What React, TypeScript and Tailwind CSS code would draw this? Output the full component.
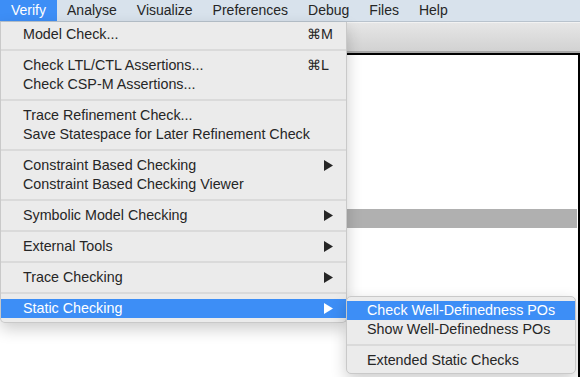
import React from 'react';

type Entry =
    | { kind: 'item'; label: string; shortcut?: string; submenu?: boolean; active?: boolean }
    | { kind: 'sep' };

const menuBar = ['Verify', 'Analyse', 'Visualize', 'Preferences', 'Debug', 'Files', 'Help'];

const verifyMenu: Entry[] = [
    { kind: 'item', label: 'Model Check...', shortcut: '⌘M' },
    { kind: 'sep' },
    { kind: 'item', label: 'Check LTL/CTL Assertions...', shortcut: '⌘L' },
    { kind: 'item', label: 'Check CSP-M Assertions...' },
    { kind: 'sep' },
    { kind: 'item', label: 'Trace Refinement Check...' },
    { kind: 'item', label: 'Save Statespace for Later Refinement Check' },
    { kind: 'sep' },
    { kind: 'item', label: 'Constraint Based Checking', submenu: true },
    { kind: 'item', label: 'Constraint Based Checking Viewer' },
    { kind: 'sep' },
    { kind: 'item', label: 'Symbolic Model Checking', submenu: true },
    { kind: 'sep' },
    { kind: 'item', label: 'External Tools', submenu: true },
    { kind: 'sep' },
    { kind: 'item', label: 'Trace Checking', submenu: true },
    { kind: 'sep' },
    { kind: 'item', label: 'Static Checking', submenu: true, active: true },
];

const staticMenu: Entry[] = [
    { kind: 'item', label: 'Check Well-Definedness POs', active: true },
    { kind: 'item', label: 'Show Well-Definedness POs' },
    { kind: 'sep' },
    { kind: 'item', label: 'Extended Static Checks' },
];

// small right-pointing triangle used for submenu entries
function Arrow({ white }: { white?: boolean }) {
    return (
        <svg width="9" height="11" viewBox="0 0 9 11" className="shrink-0">
            <polygon points="0,0 9,5.5 0,11" fill={white ? '#ffffff' : '#262626'} />
        </svg>
    );
}

function MenuRows({ entries, indent }: { entries: Entry[]; indent: string }) {
    return (
        <>
            {entries.map((e, i) =>
                e.kind === 'sep' ? (
                    <div key={i} className="flex h-[12px] items-center">
                        <div className="h-[2px] w-full bg-[#dadada]" />
                    </div>
                ) : (
                    <div
                        key={i}
                        className={`flex h-[19px] items-center pr-[13px] ${indent} ${
                            e.active ? 'bg-[#3d8ef6] text-white' : ''
                        }`}
                    >
                        <span className="flex-1 whitespace-nowrap">{e.label}</span>
                        {e.shortcut && <span className="w-[26px] whitespace-nowrap">{e.shortcut}</span>}
                        {e.submenu && <Arrow white={e.active} />}
                    </div>
                )
            )}
        </>
    );
}

export default function App() {
    return (
        <div className="relative h-[377px] w-[580px] overflow-hidden bg-white font-['Liberation_Sans',Arial,sans-serif] text-[14.3px] text-[#262626]">
            {/* menu bar */}
            <nav className="flex h-[22px] items-stretch border-b border-[#b9c3cd] bg-[#d8e2ec]">
                {menuBar.map((m, i) => (
                    <div
                        key={m}
                        className={`flex items-center whitespace-nowrap text-[14px] ${
                            i === 0 ? 'bg-[#3d8ef6] pl-[11px] pr-[11px] text-white' : 'px-[10px]'
                        }`}
                    >
                        {m}
                    </div>
                ))}
            </nav>

            {/* window behind the menu */}
            <div className="h-[31px] border-t border-[#f2f2f2] border-b-2 border-b-[#a8a8a8] bg-gradient-to-b from-[#e6e6e6] to-[#d2d2d2]" />
            <div className="h-[324px] border-r-2 border-t-2 border-black bg-white pr-[1px]">
                <div className="mt-[154px] h-[19px] bg-[#b0b0b0]" />
            </div>

            {/* Verify menu */}
            <div className="absolute left-0 top-[22px] w-[347px] rounded-b-[5px] border-x border-b border-[#c9c9c9] bg-[#ebebeb] pt-[3px] pb-[4px] shadow-[0_6px_16px_rgba(0,0,0,0.2)]">
                <MenuRows entries={verifyMenu} indent="pl-[22px]" />
            </div>

            {/* Static Checking submenu */}
            <div className="absolute left-[346px] top-[296px] w-[230px] overflow-hidden rounded-[5px] border border-[#c9c9c9] bg-[#ebebeb] pt-[4px] pb-[3px] shadow-[0_6px_16px_rgba(0,0,0,0.2)]">
                <MenuRows entries={staticMenu} indent="pl-[20px]" />
            </div>
        </div>
    );
}
